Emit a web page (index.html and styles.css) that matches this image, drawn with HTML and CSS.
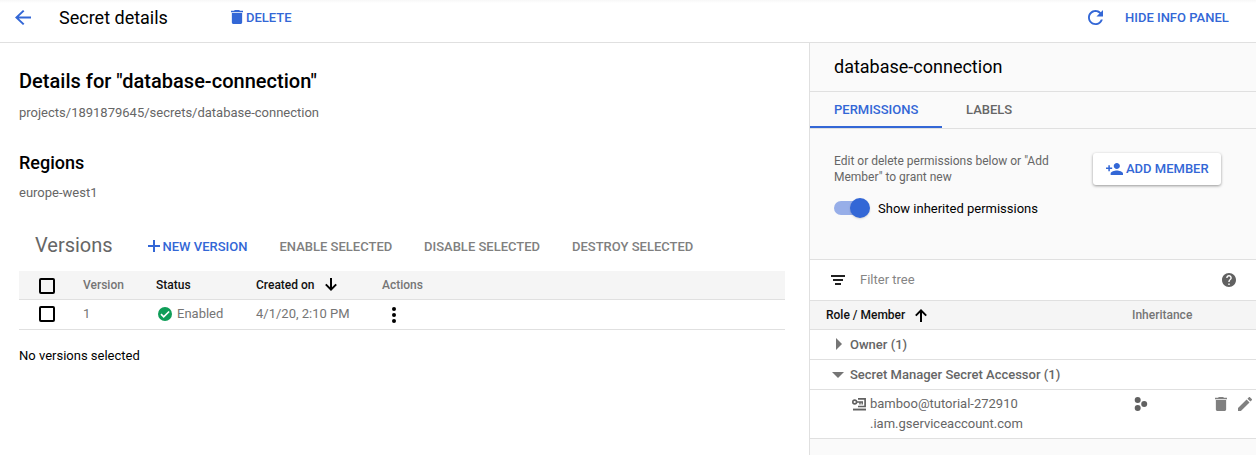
FILE: index.html
```html
<!DOCTYPE html>
<html lang="en">
<head>
<meta charset="utf-8">
<title>Secret details</title>
<link rel="stylesheet" href="styles.css">
</head>
<body>
<header class="topbar">
  <svg class="back" width="16" height="15" viewBox="4 4 16 16" preserveAspectRatio="none"><path d="M20 11H7.83l5.59-5.59L12 4l-8 8 8 8 1.41-1.41L7.83 13H20v-2z"/></svg>
  <h1 class="page-title">Secret details</h1>
  <button class="action delete"><svg width="12" height="14" viewBox="5 3 14 18" preserveAspectRatio="none"><path d="M6 19c0 1.1.9 2 2 2h8c1.1 0 2-.9 2-2V7H6v12zM19 4h-3.5l-1-1h-5l-1 1H5v2h14V4z"/></svg><span>DELETE</span></button>
  <svg class="refresh" width="15" height="15" viewBox="4 4 16 16"><path d="M17.65 6.35C16.2 4.9 14.21 4 12 4c-4.42 0-7.99 3.58-7.99 8s3.57 8 7.99 8c3.73 0 6.84-2.55 7.73-6h-2.08c-.82 2.33-3.04 4-5.65 4-3.31 0-6-2.69-6-6s2.69-6 6-6c1.66 0 3.14.69 4.22 1.78L13 11h7V4l-2.35 2.35z"/></svg>
  <button class="action hide-panel">HIDE INFO PANEL</button>
</header>
<div class="layout">
  <main class="details">
    <h2 class="details-title">Details for "database-connection"</h2>
    <p class="path">projects/1891879645/secrets/database-connection</p>
    <h3 class="regions-title">Regions</h3>
    <p class="region">europe-west1</p>
    <div class="toolbar">
      <h3 class="versions-title">Versions</h3>
      <button class="action new-version"><svg width="12" height="12" viewBox="0 0 12 12"><path d="M5 0h2v5h5v2H7v5H5V7H0V5h5z"/></svg><span>NEW VERSION</span></button>
      <button class="action disabled enable">ENABLE SELECTED</button>
      <button class="action disabled disable">DISABLE SELECTED</button>
      <button class="action disabled destroy">DESTROY SELECTED</button>
    </div>
    <div class="table">
      <div class="row head">
        <span class="check"></span>
        <span>Version</span>
        <span class="strong">Status</span>
        <span class="strong created">Created on<svg width="12" height="13" viewBox="0 0 12 13"><path d="M6 0v11.5M.8 6.4 6 11.6l5.2-5.2" fill="none" stroke="#000" stroke-width="2"/></svg></span>
        <span>Actions</span>
      </div>
      <div class="row">
        <span class="check"></span>
        <span>1</span>
        <span class="status"><svg width="14" height="14" viewBox="0 0 14 14"><circle cx="7" cy="7" r="7" fill="#0f9d58"/><path d="M3 7.2 5.7 9.8l5.4-5.3" fill="none" stroke="#fff" stroke-width="1.7"/></svg>Enabled</span>
        <span class="date">4/1/20, 2:10 PM</span>
        <span class="menu"><svg width="4" height="16" viewBox="0 0 4 16"><circle cx="2" cy="2" r="2"/><circle cx="2" cy="8" r="2"/><circle cx="2" cy="14" r="2"/></svg></span>
      </div>
    </div>
    <p class="selection">No versions selected</p>
  </main>
  <aside class="panel">
    <h2 class="panel-title">database-connection</h2>
    <nav class="tabs"><a class="tab active">PERMISSIONS</a><a class="tab">LABELS</a></nav>
    <section class="intro">
      <div class="intro-top">
        <p class="hint">Edit or delete permissions below or "Add<br>Member" to grant new</p>
        <button class="add"><svg width="17" height="12" viewBox="1 4 22 16" preserveAspectRatio="none"><path d="M15 12c2.21 0 4-1.79 4-4s-1.79-4-4-4-4 1.79-4 4 1.79 4 4 4zm-9-2V7H4v3H1v2h3v3h2v-3h3v-2H6zm9 4c-2.67 0-8 1.34-8 4v2h16v-2c0-2.66-5.33-4-8-4z"/></svg><span>ADD MEMBER</span></button>
      </div>
      <label class="inherit"><span class="switch"><span class="knob"></span></span><span class="inherit-text">Show inherited permissions</span></label>
    </section>
    <div class="filter">
      <svg width="14" height="10" viewBox="0 0 14 10"><path d="M0 0h14v2H0zM2 4h10v2H2zM4 8h6v2H4z" fill="#212121"/></svg>
      <span class="filter-text">Filter tree</span>
      <svg class="help" width="14" height="14" viewBox="2 2 20 20"><path d="M12 2C6.48 2 2 6.48 2 12s4.48 10 10 10 10-4.48 10-10S17.52 2 12 2zm1 17h-2v-2h2v2zm2.07-7.75l-.9.92C13.45 12.9 13 13.5 13 15h-2v-.5c0-1.1.45-2.1 1.17-2.83l1.24-1.26c.37-.36.59-.86.59-1.41 0-1.1-.9-2-2-2s-2 .9-2 2H8c0-2.21 1.79-4 4-4s4 1.79 4 4c0 .88-.36 1.68-.93 2.25z"/></svg>
    </div>
    <div class="tree-head">
      <span class="role">Role / Member</span>
      <svg width="12" height="13" viewBox="0 0 12 13"><path d="M6 13V1.5M.8 6.6 6 1.4l5.2 5.2" fill="none" stroke="#000" stroke-width="2"/></svg>
      <span class="inheritance">Inheritance</span>
    </div>
    <div class="tree-row owner"><svg width="6" height="12" viewBox="0 0 6 12"><path d="M0 0l6 6-6 6z"/></svg><span>Owner (1)</span></div>
    <div class="tree-row accessor"><svg width="12" height="6" viewBox="0 0 12 6"><path d="M0 0h12L6 6z"/></svg><span>Secret Manager Secret Accessor (1)</span></div>
    <div class="member">
      <svg class="account" width="14" height="13" viewBox="0 0 14 13"><g fill="none" stroke="#616161"><circle cx="2.7" cy="4" r="1.9" stroke-width="1.6"/><path d="M4.6 4H11M8 4v2.4M10.2 4v2.4" stroke-width="1.4"/><path d="M6 .9h7.1v7.6H6" stroke-width="1.7"/></g><path d="M1 10.600h13v1.900H1z" fill="#616161"/></svg>
      <p class="email">bamboo@tutorial-272910<br>.iam.gserviceaccount.com</p>
      <svg class="inherited" width="14" height="14" viewBox="0 0 14 14"><circle cx="3.7" cy="3" r="3"/><circle cx="3.7" cy="11" r="3"/><circle cx="10.2" cy="7" r="3"/></svg>
      <svg class="trash" width="12" height="14" viewBox="5 3 14 18" preserveAspectRatio="none"><path d="M6 19c0 1.1.9 2 2 2h8c1.1 0 2-.9 2-2V7H6v12zM19 4h-3.5l-1-1h-5l-1 1H5v2h14V4z"/></svg>
      <svg class="edit" width="14" height="14" viewBox="3 3 18 18"><path d="M3 17.25V21h3.75L17.81 9.94l-3.75-3.75L3 17.25zM20.71 7.04c.39-.39.39-1.02 0-1.41l-2.34-2.34c-.39-.39-1.02-.39-1.41 0l-1.83 1.83 3.75 3.75 1.83-1.83z"/></svg>
    </div>
  </aside>
</div>
</body>
</html>
```

FILE: styles.css
```css
* { box-sizing: border-box; }
body { margin: 0; width: 1256px; height: 455px; overflow: hidden; background: #fff; color: #000; font-family: Roboto, "Liberation Sans", sans-serif; font-size: 13px; display: flex; flex-direction: column; }
h1, h2, h3, p { margin: 0; font-weight: 400; white-space: nowrap; }
svg { display: block; flex: none; }
button { border: 0; margin: 0; padding: 0; background: none; font: 500 13px/16px Roboto, "Liberation Sans", sans-serif; white-space: nowrap; text-align: left; }
span { white-space: nowrap; }

.topbar { height: 43px; flex: none; display: flex; align-items: flex-start; padding: 10px 0 0 15px; border-bottom: 1px solid #e0e0e0; background: linear-gradient(#f7f7f7, #fff 3px); fill: #3367d6; }
.page-title { margin-left: 28px; width: 172px; margin-top: -3px; font-size: 18px; line-height: 22px; }
.action { display: flex; color: #3367d6; fill: #3367d6; }
.delete { gap: 3px; width: 857px; }
.refresh { margin-right: 22px; }

.layout { flex: 1; display: flex; min-height: 0; }
.details { width: 809px; flex: none; padding: 26px 24px 0 19px; }
.details-title { font-size: 20px; line-height: 24px; font-weight: 500; letter-spacing: .02px; }
.path { margin-top: 12px; line-height: 16px; color: #666; }
.regions-title { margin-top: 31px; font-size: 18px; line-height: 22px; font-weight: 500; }
.region { margin-top: 11px; line-height: 16px; color: #666; }
.toolbar { display: flex; margin-top: 32px; height: 38px; padding-left: 16px; }
.versions-title { width: 113px; font-size: 20px; line-height: 24px; color: #666; }
.new-version { gap: 2.5px; width: 131.5px; padding-top: 7px; }
.new-version span { margin-top: -1px; }
.disabled { color: #808080; padding-top: 6px; }
.enable { width: 144.5px; }
.disable { width: 148px; }

.row { display: grid; grid-template-columns: 64px 73px 100px 126px 1fr; height: 30px; border-bottom: 1px solid #e0e0e0; line-height: 28px; color: #757575; }
.row.head { height: 29px; background: #f5f5f5; font-size: 12px; font-weight: 500; }
.head .strong { color: #111; }
.check { width: 16px; height: 16px; margin: 6px 0 0 20px; border: 2px solid #000; border-radius: 2px; }
.head .check { margin-top: 7px; }
.created { display: flex; gap: 10px; }
.created svg { margin-top: 7px; }
.status { display: flex; gap: 5px; padding-left: 2px; }
.status svg { margin-top: 7px; }
.menu { padding: 7px 0 0 10px; fill: #000; }
.selection { margin-top: 18px; line-height: 16px; }

.panel { flex: 1; border-left: 1px solid #e0e0e0; background: #fafafa; min-width: 0; }
.panel-title { height: 49px; padding-left: 24px; font-size: 18px; line-height: 47px; border-bottom: 1px solid #e0e0e0; }
.tabs { display: flex; height: 37px; border-bottom: 1px solid #e0e0e0; font-weight: 500; line-height: 35px; color: #666; }
.tab { padding: 0 24px; height: 36px; }
.tab.active { width: 132px; color: #3367d6; border-bottom: 2px solid #3367d6; }
.intro { height: 131px; padding: 24px 35px 0 24px; border-bottom: 1px solid #e0e0e0; }
.intro-top { display: flex; justify-content: space-between; height: 45px; }
.hint { font-size: 12px; line-height: 16px; color: #666; }
.add { display: flex; gap: 3px; width: 128px; height: 32px; padding: 10px 0 0 13px; border-radius: 3px; background: #fff; box-shadow: 0 1px 3px rgba(0,0,0,.4); color: #3367d6; fill: #3367d6; }
.add span { margin-top: -2px; }
.inherit { display: flex; gap: 8px; }
.switch { width: 36px; height: 14px; margin-top: 3px; border-radius: 7px; background: linear-gradient(90deg, #97aee8 32px, transparent 32px); display: flex; justify-content: flex-end; }
.knob { width: 20px; height: 20px; margin-top: -3px; border-radius: 50%; background: #3367d6; box-shadow: 0 1px 2px rgba(0,0,0,.15); }
.inherit-text { line-height: 20px; margin-top: 1px; }
.filter { display: flex; height: 41px; padding: 0 20px 0 21px; background: #fff; border-bottom: 1px solid #e0e0e0; }
.filter svg { margin-top: 15px; }
.filter-text { margin-left: 15px; line-height: 39px; color: #858585; }
.filter .help { margin: 13px 0 0 auto; fill: #616161; }
.tree-head { display: flex; height: 29px; padding-left: 16px; border-bottom: 1px solid #e0e0e0; background: #f5f5f5; font-size: 12px; line-height: 28px; font-weight: 500; color: #757575; }
.role { width: 89px; color: #111; }
.tree-head svg { margin-top: 8px; }
.inheritance { margin-left: 205px; }
.tree-row { display: flex; height: 30px; border-bottom: 1px solid #e0e0e0; background: #fff; line-height: 29px; font-weight: 500; color: #666; fill: #757575; }
.owner { padding-left: 26px; gap: 8px; }
.owner svg { margin-top: 8px; }
.accessor { padding-left: 22px; gap: 6px; }
.accessor svg { margin-top: 12px; }
.member { display: flex; height: 49px; padding: 4px 0 0 42px; border-bottom: 1px solid #e0e0e0; background: #fff; color: #666; fill: #808080; }
.member svg { margin-top: 3px; }
.member .account { margin-top: 4px; }
.email { margin-left: 4px; width: 264px; line-height: 20px; }
.member .inherited { fill: #616161; width: 14px; }
.trash { margin-left: 67px; }
.edit { margin-left: 11px; }
```
